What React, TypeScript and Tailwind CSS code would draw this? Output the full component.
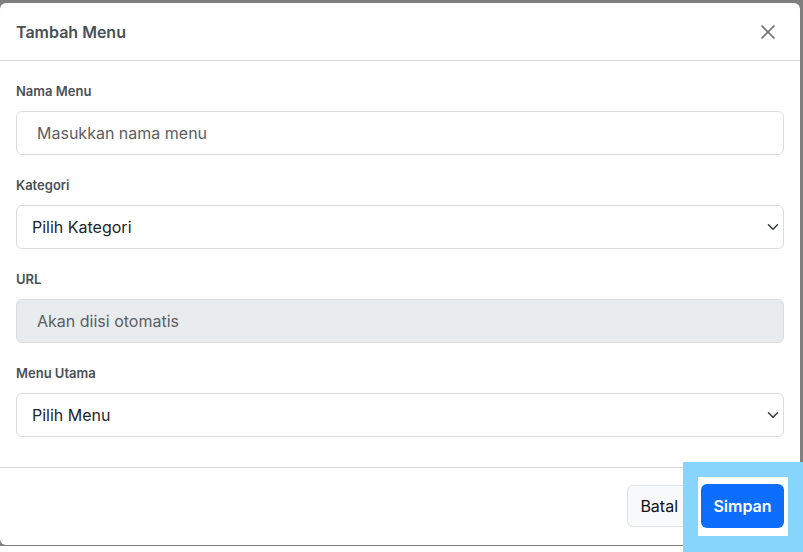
import { X } from 'lucide-react';

const font = { fontFamily: 'Inter, "Noto Sans", sans-serif' };

const Chevron = () => (
    <svg width="12" height="12" viewBox="0 0 16 16" className="text-[#343a40]">
        <path d="M2 5l6 6 6-6" fill="none" stroke="currentColor" strokeWidth="2" strokeLinecap="round" strokeLinejoin="round" />
    </svg>
);

const Label = ({ text }: { text: string }) => (
    <div className="mb-[10px] h-[20px] text-[13px] font-semibold leading-[20px] text-[#4a5058]">{text}</div>
);

const App = () => {
    return (
        <div className="h-[552px] w-[803px] overflow-hidden bg-white" style={font}>
            <div className="relative h-[546px] w-[803px] bg-[#7f7f7f] pt-[3px] pr-[3px]">
                <div className="flex h-[542px] w-[800px] flex-col rounded-md bg-white">
                    <div className="flex h-[58px] items-center justify-between border-b border-[#d6d6d6] pr-[20px] pl-[16px]">
                        <span className="text-[16px] font-semibold text-[#495057]">Tambah Menu</span>
                        <X size={24} strokeWidth={1.7} className="text-[#6f6f6f]" />
                    </div>
                    <div className="flex flex-col px-[16px] pt-[20px]">
                        <Label text="Nama Menu" />
                        <div className="flex h-[44px] items-center rounded-md border border-[#dcdcdc] pl-[20px] text-[16px] text-[#5b5e62]">
                            Masukkan nama menu
                        </div>
                        <div className="h-[20px]" />
                        <Label text="Kategori" />
                        <div className="flex h-[44px] items-center justify-between rounded-md border border-[#dcdcdc] pr-[4px] pl-[15px] text-[16px] text-[#212529]">
                            <span>Pilih Kategori</span>
                            <Chevron />
                        </div>
                        <div className="h-[20px]" />
                        <Label text="URL" />
                        <div className="flex h-[44px] items-center rounded-md border border-[#dcdcdc] bg-[#e9ecef] pl-[20px] text-[16px] text-[#5b5e62]">
                            Akan diisi otomatis
                        </div>
                        <div className="h-[20px]" />
                        <Label text="Menu Utama" />
                        <div className="flex h-[44px] items-center justify-between rounded-md border border-[#dcdcdc] pr-[4px] pl-[15px] text-[16px] text-[#212529]">
                            <span>Pilih Menu</span>
                            <Chevron />
                        </div>
                    </div>
                    <div className="mt-[30px] flex flex-1 items-center justify-end gap-[8px] border-t border-[#d6d6d6] pr-[16px] pb-[2px]">
                        <button className="h-[42px] rounded-md border border-[#dee2e6] bg-[#f8f9fa] pr-[14px] pl-[12px] text-[16px] text-[#111]">
                            Batal
                        </button>
                        <button className="relative z-10 h-[44px] w-[83px] rounded-md bg-[#0d6efd] text-[16px] font-semibold text-white">
                            Simpan
                        </button>
                    </div>
                </div>
                <div className="absolute top-[462px] left-[683px] h-[90px] w-[120px] bg-[#87d4fc] pt-[15px] pl-[15px]">
                    <div className="h-[59px] w-[90px] bg-white" />
                </div>
            </div>
        </div>
    );
};

export default App;
